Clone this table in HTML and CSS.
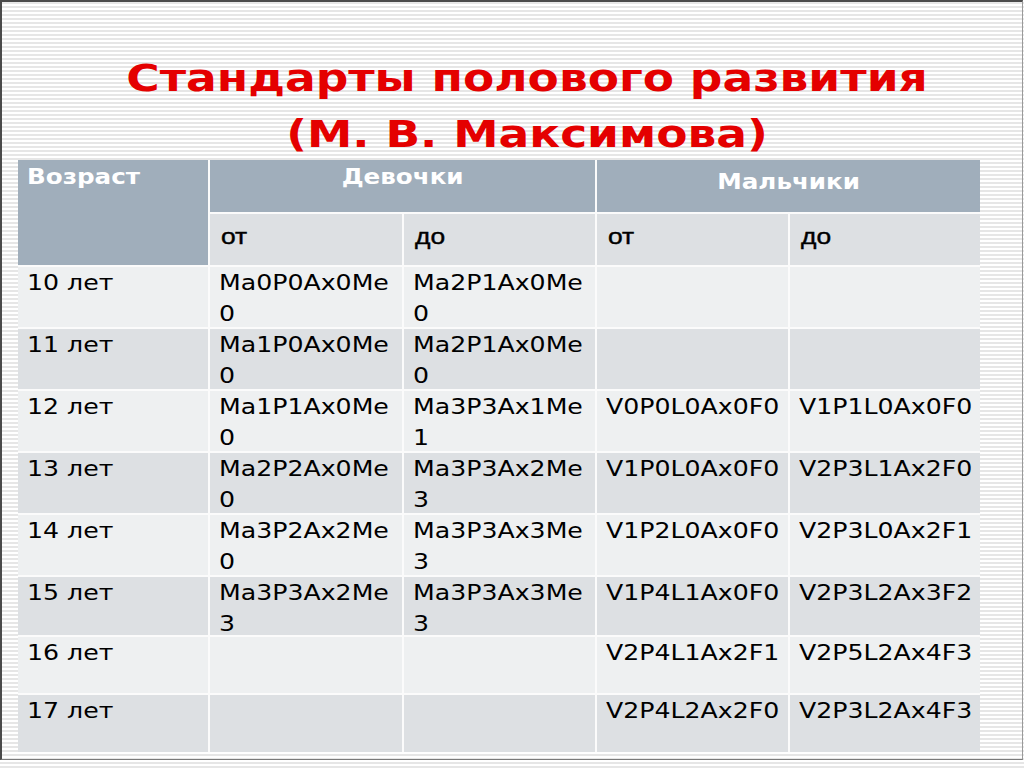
FILE: index.html
```html
<!DOCTYPE html>
<html lang="ru">
<head>
<meta charset="utf-8">
<title>Стандарты полового развития</title>
<link rel="stylesheet" href="styles.css">
</head>
<body>
<div class="slide">
  <div class="frame">
    <h1 class="title">Стандарты полового развития<br>(М. В. Максимова)</h1>
    <div class="table">
      <div class="cell head age"><span class="t">Возраст</span></div>
      <div class="cell head group"><span class="t">Девочки</span></div>
      <div class="cell head group boys"><span class="t">Мальчики</span></div>
      <div class="cell sub"><span class="t">от</span></div>
      <div class="cell sub"><span class="t">до</span></div>
      <div class="cell sub"><span class="t">от</span></div>
      <div class="cell sub"><span class="t">до</span></div>

      <div class="cell lt"><span class="t">10 лет</span></div>
      <div class="cell lt"><span class="t">Ma0P0Ax0Me0</span></div>
      <div class="cell lt"><span class="t">Ma2P1Ax0Me0</span></div>
      <div class="cell lt"></div>
      <div class="cell lt"></div>

      <div class="cell dk"><span class="t">11 лет</span></div>
      <div class="cell dk"><span class="t">Ma1P0Ax0Me0</span></div>
      <div class="cell dk"><span class="t">Ma2P1Ax0Me0</span></div>
      <div class="cell dk"></div>
      <div class="cell dk"></div>

      <div class="cell lt"><span class="t">12 лет</span></div>
      <div class="cell lt"><span class="t">Ma1P1Ax0Me0</span></div>
      <div class="cell lt"><span class="t">Ma3P3Ax1Me1</span></div>
      <div class="cell lt"><span class="t">V0P0L0Ax0F0</span></div>
      <div class="cell lt"><span class="t">V1P1L0Ax0F0</span></div>

      <div class="cell dk"><span class="t">13 лет</span></div>
      <div class="cell dk"><span class="t">Ma2P2Ax0Me0</span></div>
      <div class="cell dk"><span class="t">Ma3P3Ax2Me3</span></div>
      <div class="cell dk"><span class="t">V1P0L0Ax0F0</span></div>
      <div class="cell dk"><span class="t">V2P3L1Ax2F0</span></div>

      <div class="cell lt"><span class="t">14 лет</span></div>
      <div class="cell lt"><span class="t">Ma3P2Ax2Me0</span></div>
      <div class="cell lt"><span class="t">Ma3P3Ax3Me3</span></div>
      <div class="cell lt"><span class="t">V1P2L0Ax0F0</span></div>
      <div class="cell lt"><span class="t">V2P3L0Ax2F1</span></div>

      <div class="cell dk"><span class="t">15 лет</span></div>
      <div class="cell dk"><span class="t">Ma3P3Ax2Me3</span></div>
      <div class="cell dk"><span class="t">Ma3P3Ax3Me3</span></div>
      <div class="cell dk"><span class="t">V1P4L1Ax0F0</span></div>
      <div class="cell dk"><span class="t">V2P3L2Ax3F2</span></div>

      <div class="cell lt"><span class="t">16 лет</span></div>
      <div class="cell lt"></div>
      <div class="cell lt"></div>
      <div class="cell lt"><span class="t">V2P4L1Ax2F1</span></div>
      <div class="cell lt"><span class="t">V2P5L2Ax4F3</span></div>

      <div class="cell dk"><span class="t">17 лет</span></div>
      <div class="cell dk"></div>
      <div class="cell dk"></div>
      <div class="cell dk"><span class="t">V2P4L2Ax2F0</span></div>
      <div class="cell dk"><span class="t">V2P3L2Ax4F3</span></div>
    </div>
  </div>
</div>
</body>
</html>
```

FILE: styles.css
```css
html, body {
  margin: 0;
  padding: 0;
}

body {
  width: 1024px;
  height: 768px;
  overflow: hidden;
  font-family: "DejaVu Sans", Verdana, sans-serif;
}

.slide {
  width: 1024px;
  height: 768px;
  overflow: hidden;
  background: repeating-linear-gradient(to bottom, #ffffff 0, #ffffff 2px, #e6e6e6 2px, #e6e6e6 4px);
}

.frame {
  box-sizing: border-box;
  width: 1023px;
  height: 760px;
  border-left: 2px solid #4a4a4a;
  border-top: 2px solid #4a4a4a;
  border-right: 1px solid #9a9a9a;
  border-bottom: 1px solid #7a7a7a;
  padding-top: 49px;
}

.title {
  box-sizing: border-box;
  margin: 0 0 0 175px;
  width: 700px;
  height: 109px;
  text-align: center;
  white-space: nowrap;
  font-family: "DejaVu Sans", Verdana, sans-serif;
  font-weight: bold;
  font-size: 37px;
  line-height: 56px;
  color: #e40000;
  transform: scaleX(1.23);
  transform-origin: 50% 0;
}

.table {
  margin-left: 16px;
  display: grid;
  grid-template-columns: 190px 192px 191px 191px 190px;
  grid-template-rows: 52px 51px 60px 60px 60px 60px 60px 58px 56px 57px;
  gap: 2px;
  width: 962px;
  background: #fbfbfb;
}

.cell {
  box-sizing: border-box;
  padding: 1px 6px 0 9px;
  font-size: 21px;
  line-height: 31px;
  color: #000;
}

.t {
  display: block;
  width: 83.4%;
  word-break: break-all;
  transform: scaleX(1.2);
  transform-origin: 0 0;
}

.head {
  background: #a0aebb;
  color: #fff;
  font-weight: bold;
  font-size: 20.5px;
  line-height: 26px;
  padding-top: 4px;
  padding-left: 9px;
}

.age {
  grid-row: span 2;
}

.group {
  grid-column: span 2;
  text-align: center;
  padding-left: 0;
  padding-right: 0;
}

.boys {
  padding-top: 9px;
}

.sub {
  background: #dde0e3;
  font-family: "Liberation Sans", Arial, sans-serif;
  font-size: 22px;
  padding-top: 7px;
  padding-left: 11px;
  -webkit-text-stroke: 0.4px #000;
}

.lt {
  background: #eef0f1;
}

.dk {
  background: #dde0e3;
}
```
